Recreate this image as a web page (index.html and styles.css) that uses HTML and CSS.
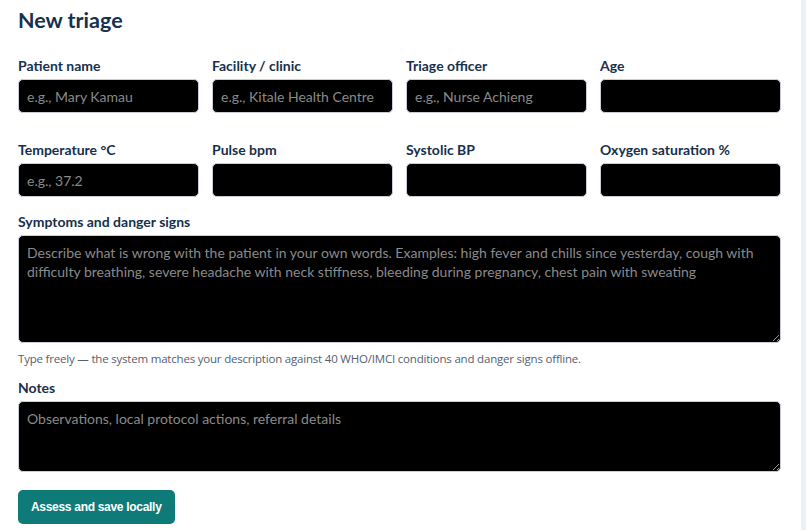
FILE: index.html
```html
<!DOCTYPE html>
<html lang="en">
  <head>
    <meta charset="UTF-8" />
    <meta name="viewport" content="width=device-width, initial-scale=1.0" />
    <title>New triage</title>
    <link rel="stylesheet" href="styles.css">
  </head>
  <body>
    <div class="panel">
      <h1>New triage</h1>
      <form class="triage-form" onsubmit="return false">
        <div class="grid">
          <label class="field">
            <span>Patient name</span>
            <input type="text" placeholder="e.g., Mary Kamau" />
          </label>
          <label class="field">
            <span>Facility / clinic</span>
            <input type="text" placeholder="e.g., Kitale Health Centre" />
          </label>
          <label class="field">
            <span>Triage officer</span>
            <input type="text" placeholder="e.g., Nurse Achieng" />
          </label>
          <label class="field">
            <span>Age</span>
            <input type="number" />
          </label>
          <label class="field">
            <span>Temperature °C</span>
            <input type="text" placeholder="e.g., 37.2" />
          </label>
          <label class="field">
            <span>Pulse bpm</span>
            <input type="number" />
          </label>
          <label class="field">
            <span>Systolic BP</span>
            <input type="number" />
          </label>
          <label class="field">
            <span>Oxygen saturation %</span>
            <input type="number" />
          </label>
        </div>
        <label class="field wide">
          <span>Symptoms and danger signs</span>
          <textarea class="symptoms" placeholder="Describe what is wrong with the patient in your own words. Examples: high fever and chills since yesterday, cough with difficulty breathing, severe headache with neck stiffness, bleeding during pregnancy, chest pain with sweating"></textarea>
        </label>
        <p class="hint">Type freely — the system matches your description against 40 WHO/IMCI conditions and danger signs offline.</p>
        <label class="field notes-field">
          <span>Notes</span>
          <textarea class="notes" placeholder="Observations, local protocol actions, referral details"></textarea>
        </label>
        <button type="submit">Assess and save locally</button>
      </form>
    </div>
  </body>
</html>
```

FILE: styles.css
```css
html,
body {
  margin: 0;
  padding: 0;
}
body {
  background-color: #eef1f4;
  font-family: Lato, "Open Sans", sans-serif;
  color: #17304d;
}
.panel {
  background-color: white;
  width: 763px;
  min-height: 530px;
  padding: 0 20px 0 18px;
  box-sizing: content-box;
}
h1 {
  margin: 0;
  padding-top: 5px;
  font-size: 21.5px;
  font-weight: 700;
  line-height: 30px;
  color: #17304d;
}
.triage-form {
  margin-top: 21px;
}
.grid {
  display: grid;
  grid-template-columns: repeat(4, minmax(0, 1fr));
  column-gap: 13px;
  row-gap: 27px;
}
.field {
  display: flex;
  flex-direction: column;
}
.field span {
  font-size: 14px;
  font-weight: 700;
  line-height: 19px;
  margin-bottom: 4px;
}
.field.wide {
  margin-top: 15px;
}
.notes-field {
  margin-top: 12px;
}
input,
textarea {
  width: 100%;
  min-width: 0;
  background-color: black;
  color: white;
  border: 1px solid #c9ced6;
  border-radius: 5px;
  font-family: Lato, "Open Sans", sans-serif;
  font-size: 14px;
  box-sizing: border-box;
  outline: none;
}
input {
  height: 34px;
  padding: 0 8px;
}
input::placeholder,
textarea::placeholder {
  color: #8a8a8a;
}
input[type="number"]::-webkit-inner-spin-button {
  display: none;
}
textarea {
  padding: 7px 8px;
  line-height: 19px;
  resize: vertical;
}
.symptoms {
  height: 108px;
}
.notes {
  height: 71px;
}
.hint {
  margin: 8px 0 0;
  font-family: "Open Sans", sans-serif;
  font-size: 11.5px;
  color: #56606d;
  letter-spacing: -0.2px;
}
button {
  margin-top: 18px;
  height: 34px;
  padding: 0 13px;
  background-color: #0f7b78;
  color: white;
  border: none;
  border-radius: 5px;
  font-family: "Liberation Sans", Arial, sans-serif;
  font-size: 12px;
  font-weight: 700;
  letter-spacing: -0.3px;
  cursor: pointer;
}
```
